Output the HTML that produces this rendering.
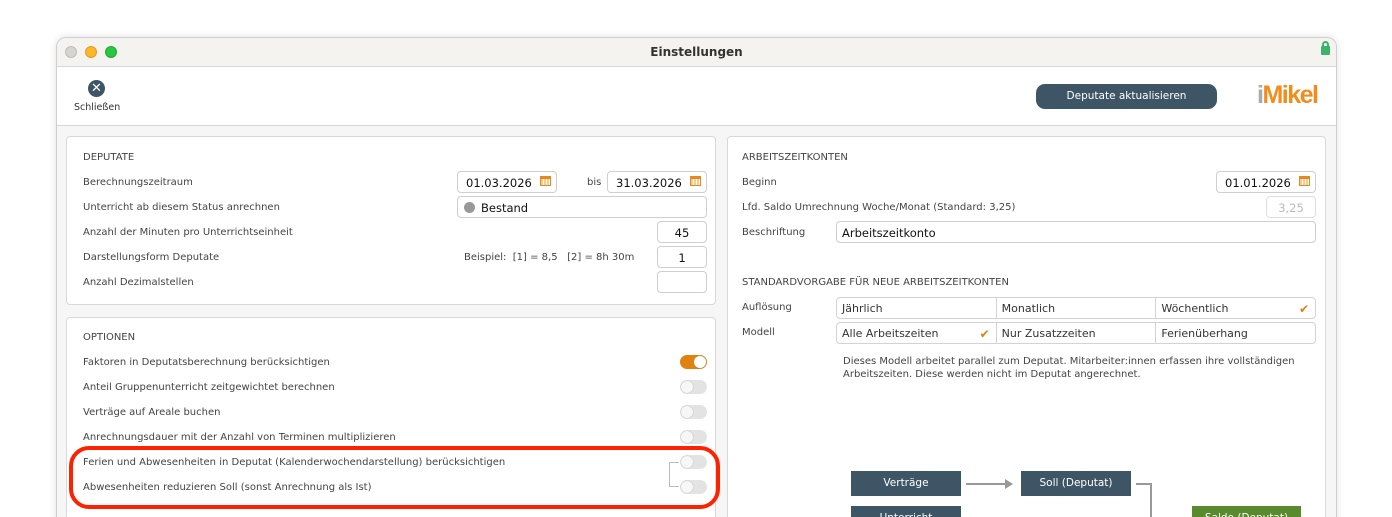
<!DOCTYPE html>
<html><head><meta charset="utf-8"><style>
*{box-sizing:border-box;margin:0;padding:0}
html{width:1392px;height:517px;overflow:hidden}
body{width:1392px;height:517px;background:#fff;position:relative;overflow:hidden;font-family:"DejaVu Sans","Liberation Sans",sans-serif;font-size:10px;color:#444}
.a{position:absolute}
.t{position:absolute;line-height:14px;white-space:nowrap}
.win{position:absolute;left:56px;top:37px;width:1281px;height:490px;border:1px solid #cfcfcf;border-radius:10px;background:#f6f6f6;overflow:hidden;box-shadow:0 0 8px rgba(0,0,0,.12)}
.title{position:absolute;left:0;top:0;width:100%;height:29px;background:#f5f3f0;border-bottom:1px solid #d8d8d8}
.tool{position:absolute;left:0;top:29px;width:100%;height:59px;background:#fff;border-bottom:1px solid #d6d6d6}
.panel{position:absolute;background:#fff;border:1px solid #d8d8d8;border-radius:4px}
.in{position:absolute;background:#fff;border:1px solid #cfcfcf;border-radius:4px;height:22px;font-size:11.5px;color:#111;line-height:22px}
.cal{position:absolute;right:5px;top:4px;width:11px;height:10px;border:1px solid #e58a1f;background:repeating-linear-gradient(90deg,#f7c98f 0 2px,#fff 2px 3px);border-top:3px solid #e58a1f}
.tg{position:absolute;width:27px;height:14px;border-radius:7px;background:#e3e3e3}
.tg::after{content:"";position:absolute;left:1px;top:1px;width:12px;height:12px;border-radius:50%;background:#f7f7f7;box-shadow:0 0 1px #999}
.tg.on{background:#e0820f}
.tg.on::after{left:14px;background:#fff}
.box{position:absolute;background:#3e5566;color:#fff;font-size:10.5px;text-align:center;line-height:25px;height:25px}
.seg{position:absolute;height:22px;border:1px solid #d3d3d3;border-radius:4px;background:#fff;display:flex}
.seg div{flex:1;border-right:1px solid #d3d3d3;padding-left:5px;font-size:11px;color:#333;line-height:22px;position:relative}
.seg div:last-child{border-right:0}
.ck{position:absolute;right:6px;top:0;color:#e0820f;font-size:12px;font-weight:bold}
</style></head><body>
<div class="win">
 <div class="title">
  <div class="a" style="left:8px;top:8px;width:12px;height:12px;border-radius:50%;background:#d6d4d2;border:1px solid #bfbdbb"></div>
  <div class="a" style="left:28px;top:8px;width:12px;height:12px;border-radius:50%;background:#fdb52b;border:1px solid #e09d20"></div>
  <div class="a" style="left:48px;top:8px;width:12px;height:12px;border-radius:50%;background:#29c740;border:1px solid #20a834"></div>
  <div class="t" style="left:0;width:100%;text-align:center;top:7px;font-weight:bold;font-size:12px;color:#333">Einstellungen</div>
  <div class="a" style="left:1264px;top:8px;width:9px;height:9px;background:#3bb36a;border-radius:1px"></div>
  <div class="a" style="left:1265px;top:3px;width:7px;height:7px;border:2px solid #3bb36a;border-bottom:0;border-radius:4px 4px 0 0"></div>
 </div>
 <div class="tool">
  <div class="a" style="left:31px;top:13px;width:17px;height:17px;border-radius:50%;background:#3e5566;color:#fff;font-size:13px;font-weight:bold;text-align:center;line-height:17px">✕</div>
  <div class="t" style="left:17px;top:34px;font-size:9.5px;color:#333">Schließen</div>
  <div class="a" style="left:979px;top:17px;width:181px;height:25px;border-radius:9px;background:#3e5566;color:#fff;font-size:10.5px;text-align:center;line-height:25px">Deputate aktualisieren</div>
  <div class="t" style="left:1200px;top:14px;font-family:'Liberation Sans',sans-serif;font-weight:bold;font-size:25px;line-height:28px;letter-spacing:-1.5px"><span style="color:#aaa">i</span><span style="color:#f28c1c">Mikel</span></div>
 </div>
</div>

<div class="panel" style="left:66px;top:136px;width:650px;height:169px"></div>
<div class="t" style="left:83px;top:151px">DEPUTATE</div>
<div class="t" style="left:83px;top:176px">Berechnungszeitraum</div>
<div class="t" style="left:83px;top:201px">Unterricht ab diesem Status anrechnen</div>
<div class="t" style="left:83px;top:226px">Anzahl der Minuten pro Unterrichtseinheit</div>
<div class="t" style="left:83px;top:251px">Darstellungsform Deputate</div>
<div class="t" style="left:83px;top:276px">Anzahl Dezimalstellen</div>
<div class="in" style="left:457px;top:171px;width:100px;padding-left:8px">01.03.2026<span class="cal"></span></div>
<div class="t" style="left:587px;top:176px">bis</div>
<div class="in" style="left:607px;top:171px;width:100px;padding-left:8px">31.03.2026<span class="cal"></span></div>
<div class="in" style="left:457px;top:196px;width:250px;padding-left:23px">Bestand<span class="a" style="left:6px;top:5px;width:11px;height:11px;border-radius:50%;background:#999"></span></div>
<div class="in" style="left:657px;top:221px;width:50px;text-align:center">45</div>
<div class="t" style="left:464px;top:251px">Beispiel:&nbsp; [1] = 8,5 &nbsp; [2] = 8h 30m</div>
<div class="in" style="left:657px;top:246px;width:50px;text-align:center">1</div>
<div class="in" style="left:657px;top:271px;width:50px"></div>

<div class="panel" style="left:66px;top:317px;width:650px;height:210px"></div>
<div class="t" style="left:83px;top:331px">OPTIONEN</div>
<div class="t" style="left:83px;top:356px">Faktoren in Deputatsberechnung berücksichtigen</div>
<div class="t" style="left:83px;top:381px">Anteil Gruppenunterricht zeitgewichtet berechnen</div>
<div class="t" style="left:83px;top:406px">Verträge auf Areale buchen</div>
<div class="t" style="left:83px;top:431px">Anrechnungsdauer mit der Anzahl von Terminen multiplizieren</div>
<div class="t" style="left:83px;top:456px">Ferien und Abwesenheiten in Deputat (Kalenderwochendarstellung) berücksichtigen</div>
<div class="t" style="left:83px;top:481px">Abwesenheiten reduzieren Soll (sonst Anrechnung als Ist)</div>
<div class="tg on" style="left:680px;top:355px"></div>
<div class="tg" style="left:680px;top:380px"></div>
<div class="tg" style="left:680px;top:405px"></div>
<div class="tg" style="left:680px;top:430px"></div>
<div class="tg" style="left:680px;top:455px"></div>
<div class="tg" style="left:680px;top:480px"></div>
<div class="a" style="left:669px;top:462px;width:10px;height:25px;border:1px solid #bbb;border-right:0"></div>
<div class="a" style="left:69px;top:446px;width:651px;height:63px;border:4px solid #ff2200;border-radius:20px"></div>

<div class="panel" style="left:727px;top:136px;width:599px;height:400px"></div>
<div class="t" style="left:742px;top:151px">ARBEITSZEITKONTEN</div>
<div class="t" style="left:742px;top:176px">Beginn</div>
<div class="t" style="left:742px;top:201px">Lfd. Saldo Umrechnung Woche/Monat (Standard: 3,25)</div>
<div class="t" style="left:742px;top:226px">Beschriftung</div>
<div class="in" style="left:1216px;top:171px;width:100px;padding-left:8px">01.01.2026<span class="cal"></span></div>
<div class="in" style="left:1266px;top:196px;width:50px;text-align:center;color:#bbb;border-color:#ddd">3,25</div>
<div class="in" style="left:836px;top:221px;width:480px;padding-left:5px">Arbeitszeitkonto</div>
<div class="t" style="left:742px;top:276px">STANDARDVORGABE FÜR NEUE ARBEITSZEITKONTEN</div>
<div class="t" style="left:742px;top:301px">Auflösung</div>
<div class="t" style="left:742px;top:326px">Modell</div>
<div class="seg" style="left:836px;top:297px;width:480px"><div>Jährlich</div><div>Monatlich</div><div>Wöchentlich<span class="ck">✔</span></div></div>
<div class="seg" style="left:836px;top:322px;width:480px"><div>Alle Arbeitszeiten<span class="ck">✔</span></div><div>Nur Zusatzzeiten</div><div>Ferienüberhang</div></div>
<div class="t" style="left:843px;top:355px;line-height:13px">Dieses Modell arbeitet parallel zum Deputat. Mitarbeiter:innen erfassen ihre vollständigen<br>Arbeitszeiten. Diese werden nicht im Deputat angerechnet.</div>
<div class="box" style="left:851px;top:471px;width:110px">Verträge</div>
<div class="a" style="left:966px;top:483px;width:40px;height:2px;background:#999"></div>
<div class="a" style="left:1005px;top:479px;width:0;height:0;border-left:8px solid #999;border-top:5px solid transparent;border-bottom:5px solid transparent"></div>
<div class="box" style="left:1021px;top:471px;width:110px">Soll (Deputat)</div>
<div class="a" style="left:1136px;top:483px;width:16px;height:40px;border-top:2px solid #999;border-right:2px solid #999"></div>
<div class="box" style="left:851px;top:506px;width:110px">Unterricht</div>
<div class="box" style="left:1192px;top:506px;width:109px;background:#5a8a2e">Saldo (Deputat)</div>
</body></html>
